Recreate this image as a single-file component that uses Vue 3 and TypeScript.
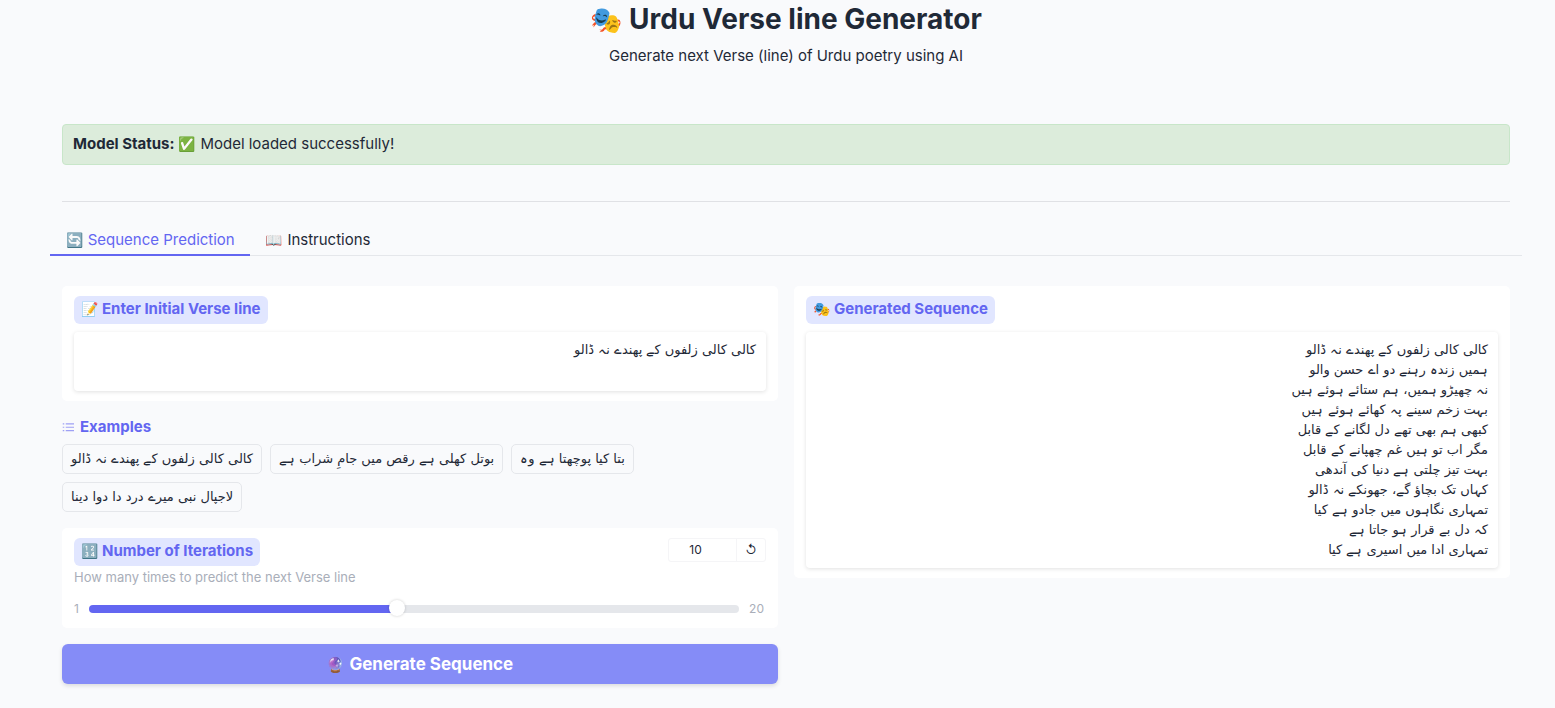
<script setup lang="ts">
import { ref, computed } from 'vue'

const examples: string[] = [
  'کالی کالی زلفوں کے پھندے نہ ڈالو',
  'بوتل کھلی ہے رقص میں جامِ شراب ہے',
  'بتا کیا پوچھتا ہے وہ',
  'لاجپال نبی میرے درد دا دوا دینا',
]

const verse = ref(examples[0])
const iterations = ref(10)
const tab = ref<'predict' | 'help'>('predict')
const result = ref(
  [
    'کالی کالی زلفوں کے پھندے نہ ڈالو',
    'ہمیں زندہ رہنے دو اے حسن والو',
    'نہ چھیڑو ہمیں، ہم ستائے ہوئے ہیں',
    'بہت زخم سینے پہ کھائے ہوئے ہیں',
    'کبھی ہم بھی تھے دل لگانے کے قابل',
    'مگر اب تو ہیں غم چھپانے کے قابل',
    'بہت تیز چلتی ہے دنیا کی آندھی',
    'کہاں تک بچاؤ گے، جھونکے نہ ڈالو',
    'تمہاری نگاہوں میں جادو ہے کیا',
    'کہ دل بے قرار ہو جاتا ہے',
    'تمہاری ادا میں اسیری ہے کیا',
  ].join('\n'),
)
const fill = computed(() => `${((iterations.value - 1) / 19) * 100}%`)
</script>

<template>
  <main class="page">
    <header class="head">
      <h1><span class="emoji">🎭</span> Urdu Verse line Generator</h1>
      <p>Generate next Verse (line) of Urdu poetry using AI</p>
    </header>

    <div class="status" role="status">
      <strong>Model Status:</strong> <span class="emoji">✅</span> Model loaded successfully!
    </div>
    <hr class="rule" />

    <nav class="tabs" role="tablist">
      <button type="button" role="tab" :aria-selected="tab === 'predict'" :class="{ on: tab === 'predict' }" @click="tab = 'predict'">
        <span class="emoji">🔄</span> Sequence Prediction
      </button>
      <button type="button" role="tab" :aria-selected="tab === 'help'" :class="{ on: tab === 'help' }" @click="tab = 'help'">
        <span class="emoji">📖</span> Instructions
      </button>
    </nav>

    <div class="columns">
      <section class="column">
        <div class="panel">
          <label class="badge" for="verse"><span class="emoji">📝</span> Enter Initial Verse line</label>
          <textarea id="verse" v-model="verse" class="box" rows="2" dir="rtl"></textarea>
        </div>

        <div class="examples">
          <h2>
            <svg width="12" height="12" viewBox="0 0 32 32" aria-hidden="true">
              <path fill="currentColor" d="M10 6h22v3H10zm0 9h22v3H10zm0 9h22v3H10zM2 6h4v3H2zm0 9h4v3H2zm0 9h4v3H2z" />
            </svg>
            Examples
          </h2>
          <div class="chips">
            <button v-for="e in examples" :key="e" type="button" dir="rtl" @click="verse = e">{{ e }}</button>
          </div>
        </div>

        <div class="panel">
          <div class="slider-head">
            <label class="badge" for="count"><span class="emoji">🔢</span> Number of Iterations</label>
            <div class="number">
              <input id="count" v-model.number="iterations" type="number" min="1" max="20" />
              <button type="button" aria-label="Reset" @click="iterations = 10">↺</button>
            </div>
          </div>
          <p class="info">How many times to predict the next Verse line</p>
          <div class="range">
            <span>1</span>
            <input v-model.number="iterations" type="range" min="1" max="20" aria-label="Number of Iterations" :style="{ '--fill': fill }" />
            <span>20</span>
          </div>
        </div>

        <button type="button" class="primary"><span class="emoji">🔮</span> Generate Sequence</button>
      </section>

      <section class="column">
        <div class="panel">
          <label class="badge" for="result"><span class="emoji">🎭</span> Generated Sequence</label>
          <textarea id="result" v-model="result" class="box" rows="11" dir="rtl" readonly></textarea>
        </div>
      </section>
    </div>
  </main>
</template>

<style>
body {
  background: #f9fafc;
}
</style>

<style scoped>
* {
  box-sizing: border-box;
}
.page {
  padding: 0 33px 24px 50px;
  color: #1f2937;
  font: 15px/20px Inter, 'Noto Sans', sans-serif;
}
.emoji {
  font-family: 'Noto Color Emoji', sans-serif;
  font-size: 14px;
  font-weight: 400;
  line-height: 0;
}
button,
input,
textarea {
  font: inherit;
  color: inherit;
}
button {
  cursor: pointer;
}
.head {
  text-align: center;
}
h1 {
  margin: 0;
  font-size: 28px;
  line-height: 38px;
  font-weight: 700;
}
h1 .emoji {
  font-size: 26px;
}
.head p {
  margin: 8px 0 0;
}
.status {
  margin: 58px 12px 0;
  padding: 9px 10px 10px;
  border: 1px solid #c8e6c9;
  border-radius: 4px;
  background: #dcecdb;
}
.rule {
  margin: 36px 12px 0;
  border: 0;
  border-top: 1px solid #e0e1e5;
}
.tabs {
  display: flex;
  margin-top: 22px;
  border-bottom: 1px solid #e5e7eb;
}
.tabs button {
  margin-bottom: -1px;
  padding: 6px 15px 4px 16px;
  border: 0;
  border-bottom: 2px solid transparent;
  background: none;
}
.tabs .on {
  color: #6366f1;
  border-color: #6366f1;
}
.columns {
  display: grid;
  grid-template-columns: 1fr 1fr;
  align-items: start;
  gap: 16px;
  padding: 30px 12px 0;
}
.column {
  display: flex;
  flex-direction: column;
  gap: 16px;
  min-width: 0;
}
.panel {
  display: flex;
  flex-direction: column;
  align-items: flex-start;
  padding: 10px 12px;
  border-radius: 5px;
  background: #fff;
}
.badge {
  padding: 3px 7px 5px;
  border-radius: 6px;
  background: #e1e6ff;
  color: #6366f1;
  font-weight: 700;
}
.box {
  display: block;
  width: 100%;
  min-height: 59px;
  margin-top: 8px;
  padding: 8px 10px;
  border: 0;
  border-radius: 4px;
  background: #fff;
  box-shadow: 0 1px 4px #0000001f;
  font-family: 'DejaVu Sans', sans-serif;
  font-size: 13px;
  resize: none;
  overflow: hidden;
  outline: 0;
}
.examples h2 {
  display: flex;
  align-items: center;
  gap: 6px;
  margin: 0 0 7px;
  color: #6366f1;
  font-size: 15px;
  line-height: 20px;
}
.examples svg {
  opacity: 0.6;
}
.chips {
  display: flex;
  flex-wrap: wrap;
  gap: 8px;
}
.chips button {
  padding: 4px 8px;
  border: 1px solid #e5e7eb;
  border-radius: 5px;
  background: #f9fafc;
  font-family: 'DejaVu Sans', sans-serif;
  font-size: 13px;
}
.slider-head {
  display: flex;
  justify-content: space-between;
  align-items: flex-start;
  width: 100%;
}
.number {
  display: flex;
  height: 24px;
  border: 1px solid #f5f5f7;
  border-radius: 3px;
  font-size: 12px;
}
.number input {
  width: 68px;
  padding: 0 14px 0 0;
  border: 0;
  border-right: 1px solid #f5f5f7;
  background: none;
  text-align: center;
  appearance: textfield;
}
.number input::-webkit-inner-spin-button {
  display: none;
}
.number button {
  width: 28px;
  padding: 0;
  border: 0;
  background: none;
}
.info {
  margin: 1px 0 12px;
  color: #a9aeb9;
  font-size: 13px;
}
.range {
  display: flex;
  align-items: center;
  gap: 10px;
  width: 100%;
  padding-right: 2px;
  color: #a9aeb9;
  font-size: 12px;
  line-height: 19px;
}
.range input {
  flex: 1;
  min-width: 0;
  height: 16px;
  margin: 0;
  appearance: none;
  background: none;
}
.range input::-webkit-slider-runnable-track {
  height: 8px;
  border-radius: 4px;
  background: linear-gradient(to right, #6366f1 var(--fill), #e5e7eb var(--fill));
}
.range input::-webkit-slider-thumb {
  appearance: none;
  width: 16px;
  height: 16px;
  margin-top: -5px;
  border-radius: 50%;
  background: #fff;
  box-shadow: 0 0 3px #00000033;
}
.primary {
  padding: 8px;
  border: 0;
  border-radius: 6px;
  background: #858cf7;
  box-shadow: 0 2px 4px #0000001f;
  color: #fff;
  font-size: 17px;
  line-height: 24px;
  font-weight: 700;
}
.primary .emoji {
  font-size: 15px;
}
</style>
